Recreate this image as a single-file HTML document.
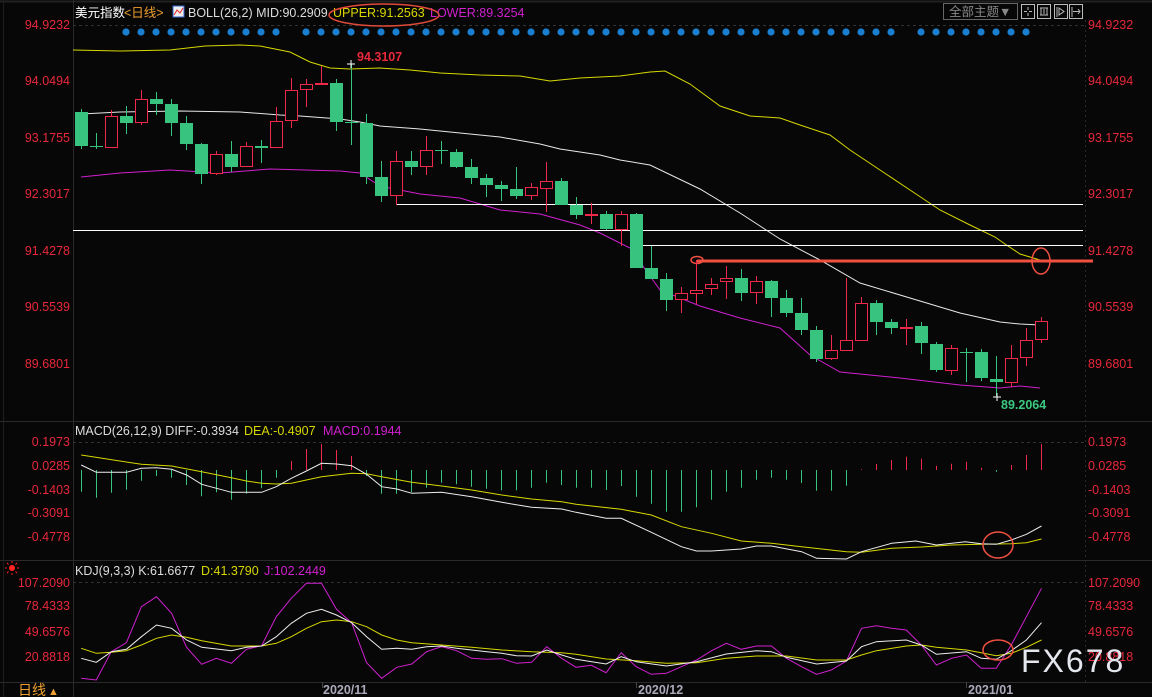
<!DOCTYPE html>
<html><head><meta charset="utf-8"><style>
html,body{margin:0;padding:0;background:#070707;overflow:hidden}
svg{display:block}
text{font-family:"Liberation Sans","Noto Sans CJK SC",sans-serif;font-size:12.5px}
</style></head><body>
<svg id="s" width="1152" height="697" viewBox="0 0 1152 697" xmlns="http://www.w3.org/2000/svg">
<rect width="1152" height="697" fill="#070707"/>
<line x1="0" y1="1.5" x2="1152" y2="1.5" stroke="#222" stroke-width="2"/>
<line x1="3.5" y1="0" x2="3.5" y2="697" stroke="#1e1e1e"/>
<line x1="73.5" y1="0" x2="73.5" y2="697" stroke="#2a2a2a"/>
<line x1="1085.5" y1="20" x2="1085.5" y2="682" stroke="#2a2a2a" stroke-dasharray="2,3"/>
<line x1="0" y1="421.5" x2="1152" y2="421.5" stroke="#2a2a2a"/>
<line x1="0" y1="560.5" x2="1152" y2="560.5" stroke="#2a2a2a"/>
<line x1="0" y1="682.5" x2="1152" y2="682.5" stroke="#2a2a2a"/>
<line x1="73" y1="25.5" x2="1085" y2="25.5" stroke="#333" stroke-dasharray="3,3"/>
<line x1="73" y1="442.5" x2="1085" y2="442.5" stroke="#333" stroke-dasharray="3,3"/>
<line x1="73" y1="582.5" x2="1085" y2="582.5" stroke="#333" stroke-dasharray="3,3"/>
<g id="g"></g>
<text x="75" y="17" fill="#fff">美元指数</text>
<text x="124" y="17" fill="#f0a030">&lt;日线&gt;</text>
<rect x="173" y="6" width="11" height="11" fill="#eee" stroke="#36c"/>
<polyline points="174,15 177,10 180,13 183,8" fill="none" stroke="#e22" stroke-width="1"/>
<text x="188" y="17" fill="#ddd">BOLL(26,2) MID:90.2909</text>
<text x="333" y="17" fill="#d8d800">UPPER:91.2563</text>
<text x="430" y="17" fill="#d020d0">LOWER:89.3254</text>
<ellipse cx="384" cy="15" rx="55" ry="11" fill="none" stroke="#e04a3a" stroke-width="1.5"/>
<rect x="943.5" y="3.5" width="74" height="16" fill="none" stroke="#666"/>
<text x="949" y="16" fill="#888">全部主题▼</text>
<g fill="none" stroke="#bbb"><rect x="1021.5" y="4.5" width="13" height="14"/><rect x="1037.5" y="4.5" width="13" height="14"/><rect x="1054.5" y="4.5" width="13" height="14"/><rect x="1069.5" y="4.5" width="13" height="14"/>
<path d="M1028 7v3M1028 13v3M1024 11.5h3M1029 11.5h3M1040 8h8M1040 15h8M1041 8v7M1047 8v7M1044 9v5M1057 7v10M1059 8l5 3.5-5 3.5zM1072 7v10M1073 11.5h7M1078 9l2 2.5-2 2.5"/></g>
<g fill="#e8283a" text-anchor="end">
<text x="70" y="29">94.9232</text><text x="70" y="85">94.0494</text><text x="70" y="142">93.1755</text><text x="70" y="198">92.3017</text><text x="70" y="255">91.4278</text><text x="70" y="311">90.5539</text><text x="70" y="368">89.6801</text>
<text x="70" y="446">0.1973</text><text x="70" y="470">0.0285</text><text x="70" y="494">-0.1403</text><text x="70" y="517">-0.3091</text><text x="70" y="541">-0.4778</text>
<text x="70" y="587">107.2090</text><text x="70" y="610">78.4333</text><text x="70" y="636">49.6576</text><text x="70" y="661">20.8818</text>
</g>
<g fill="#e8283a">
<text x="1088" y="29">94.9232</text><text x="1088" y="85">94.0494</text><text x="1088" y="142">93.1755</text><text x="1088" y="198">92.3017</text><text x="1088" y="255">91.4278</text><text x="1088" y="311">90.5539</text><text x="1088" y="368">89.6801</text>
<text x="1088" y="446">0.1973</text><text x="1088" y="470">0.0285</text><text x="1088" y="494">-0.1403</text><text x="1088" y="517">-0.3091</text><text x="1088" y="541">-0.4778</text>
<text x="1088" y="587">107.2090</text><text x="1088" y="610">78.4333</text><text x="1088" y="636">49.6576</text><text x="1088" y="661">20.8818</text>
</g>
<text x="357" y="61" fill="#e8283a" font-weight="bold">94.3107</text>
<text x="1001" y="409" fill="#3cc880" font-weight="bold">89.2064</text>
<text x="75" y="435" fill="#ddd">MACD(26,12,9) DIFF:-0.3934</text>
<text x="244" y="435" fill="#d8d800">DEA:-0.4907</text>
<text x="323" y="435" fill="#d020d0">MACD:0.1944</text>
<text x="75" y="575" fill="#ddd">KDJ(9,3,3) K:61.6677</text>
<text x="201" y="575" fill="#d8d800">D:41.3790</text>
<text x="264" y="575" fill="#d020d0">J:102.2449</text>
<circle cx="12" cy="568" r="3" fill="#f22"/>
<g stroke="#f22" stroke-width="1"><path d="M12 561v2M12 573v2M5 568h2M17 568h2M7 563l1.5 1.5M15.5 571.5l1.5 1.5M17 563l-1.5 1.5M7 573l1.5-1.5"/></g>
<text x="18" y="695" fill="#f0a030" style="font-size:14px">日线</text>
<text x="48" y="695" fill="#f0a030" style="font-size:11px">▲</text>
<g fill="#aab" font-weight="bold"><text x="323" y="694">2020/11</text><text x="638" y="694">2020/12</text><text x="968" y="694">2021/01</text></g>
<g stroke="#444"><line x1="322.5" y1="682" x2="322.5" y2="688"/><line x1="636.5" y1="682" x2="636.5" y2="688"/><line x1="966.5" y1="682" x2="966.5" y2="688"/></g>
<text x="1021" y="672" fill="#e4e6ee" style="font-size:32px;letter-spacing:2px">FX678</text>
</svg>
<script>
var g=document.getElementById('g'),h='';
function pl(pts,c,w){h+='<polyline points="'+pts.map(function(p){return p[0]+','+p[1]}).join(' ')+'" fill="none" stroke="'+c+'" stroke-width="'+(w||1)+'"/>';}
function z(a,ox,oy,sx){return a.map(function(p){return [(p[0]/sx+ox).toFixed(1),(p[1]/3+oy).toFixed(1)]});}
for(var k=0;k<=60;k++){if(k==11||k==52)continue;h+='<circle cx="'+(126+15*k)+'" cy="32" r="3.6" fill="#1a7fd0"/>';}
pl([[73,50],[120,51],[170,50],[205,46],[240,45],[260,46],[290,52],[310,62],[330,68],[350,69],[380,68],[410,70],[440,73],[480,75],[520,76],[550,81],[580,78],[620,76],[650,72],[665,71],[690,84],[720,106],[750,116],[780,118],[800,125],[830,135],[850,150],[880,170],[910,190],[940,210],[970,225],[995,237],[1005,244],[1020,254],[1040,260]],'#d8d800');
pl([[81,114],[120,112],[180,111],[240,112],[280,115],[300,116],[340,119],[360,122],[380,126],[420,129],[460,133],[500,137],[540,144],[560,149],[580,152],[600,155],[620,160],[650,165],[700,189],[740,213],[780,239],[820,260],[860,283],[920,301],[960,313],[1000,322],[1020,324],[1040,325]],'#e8e8e8');
pl([[81,177],[120,173],[170,170],[220,173],[270,169],[340,171],[360,173],[380,186],[420,194],[460,198],[500,210],[540,214],[580,225],[600,233],[630,248],[660,290],[700,306],[740,318],[780,328],[810,355],[840,372],[900,378],[960,385],[1000,388],[1020,386],[1040,388]],'#d020d0');
h+='<line x1="396" y1="204.5" x2="1083" y2="204.5" stroke="#fff"/><line x1="73" y1="230.5" x2="1083" y2="230.5" stroke="#fff"/><line x1="640" y1="245.5" x2="1083" y2="245.5" stroke="#fff"/>';
h+='<line x1="697" y1="261" x2="1093" y2="261" stroke="#f05040" stroke-width="3"/><ellipse cx="697" cy="260" rx="6" ry="3.5" fill="none" stroke="#f05040" stroke-width="1.5"/><ellipse cx="1041" cy="261" rx="9" ry="13" fill="none" stroke="#f05040" stroke-width="1.5"/>';
var C=[['g',112,146,109,149],['g',146,146,133,149],['r',116,147,110,148],['g',116,123,106,134],['r',99,122,90,125],['g',99,104,92,115],['g',104,123,99,136],['g',123,144,116,150],['g',144,174,143,184],['r',154,173,151,175],['g',154,167,141,172],['r',146,166,142,167],['g',146,148,140,163],['r',121,147,107,148],['r',90,120,78,128],['r',84,89,79,107],['r',83,84,66,85],['g',83,122,79,131],['g',122,122,64,145],['g',123,177,114,184],['g',177,196,161,202],['r',161,195,151,205],['g',161,167,151,175],['r',150,166,136,175],['g',150,151,141,164],['g',152,167,149,168],['g',167,178,159,184],['g',178,185,174,197],['g',185,189,181,201],['g',189,196,167,199],['r',187,195,183,200],['r',181,188,162,212],['g',181,205,178,205],['g',205,215,197,219],['r',214,214,203,224],['g',214,229,211,230],['r',214,229,211,246],['g',214,268,213,268],['g',268,279,246,279],['g',279,300,273,311],['r',293,299,287,313],['r',290,293,260,304],['r',284,288,278,295],['r',278,281,266,299],['g',278,293,269,301],['r',281,292,276,304],['g',281,298,280,317],['g',298,313,290,317],['g',313,330,298,335],['g',330,359,326,362],['r',350,358,335,360],['r',340,350,278,350],['r',303,340,297,341],['g',303,322,300,335],['g',322,328,319,334],['r',327,327,319,345],['g',326,343,322,354],['g',344,370,342,372],['r',348,370,345,375],['g',352,352,348,382],['g',352,378,349,381],['g',379,382,356,396],['r',358,382,345,387],['r',340,357,328,366],['r',321,339,317,343]];
C.forEach(function(c,i){var x=81+15*i,col=c[0]=='g'?'#38c47e':'#f0284a';
h+='<line x1="'+(x+.5)+'" y1="'+c[3]+'" x2="'+(x+.5)+'" y2="'+c[4]+'" stroke="'+col+'"/>';
var ht=Math.max(c[2]-c[1],1);
if(c[0]=='g')h+='<rect x="'+(x-6)+'" y="'+c[1]+'" width="13" height="'+ht+'" fill="'+col+'"/>';
else h+='<rect x="'+(x-5.5)+'" y="'+(c[1]+.5)+'" width="12" height="'+ht+'" fill="#070707" stroke="'+col+'"/>';});
h+='<path d="M347 64h8M351 60v8M993 397h8M997 393v8" stroke="#fff"/>';
var M=[230,248,233,224,197,183,188,210,244,232,254,236,220,188,138,102,87,105,123,183,236,236,232,218,203,208,215,221,226,226,218,203,210,218,218,225,213,245,266,290,290,277,254,230,218,194,188,194,204,227,227,212,163,147,135,125,131,152,146,140,158,170,150,120,87];
M.forEach(function(v,i){var x=81+15*i+.5,y=v/3+415,col=y<470?'#f0284a':'#38c47e';h+='<line x1="'+x+'" y1="470" x2="'+x+'" y2="'+y.toFixed(1)+'" stroke="'+col+'"/>';});
var S=2.722;
var dw=z([[221,150],[262,172],[344,172],[385,160],[426,158],[467,163],[508,180],[549,208],[630,232],[712,232],[752,215],[793,190],[834,168],[875,145],[916,147],[957,152],[998,178],[1039,215],[1080,222],[1121,235],[1202,232],[1284,245],[1366,262],[1447,277],[1529,282],[1568,292]],0,415,S).concat(z([[82,310],[123,310],[205,352],[287,395],[328,408],[369,408],[450,402],[491,393],[532,393],[614,410],[655,430],[736,432],[777,410],[859,385],[925,378],[981,390],[1060,380],[1103,386],[1144,388],[1185,375],[1226,358],[1267,333]],576,415,S));
var dy=z([[221,120],[385,148],[467,153],[549,170],[630,188],[671,198],[712,205],[752,207],[793,205],[875,185],[957,175],[998,176],[1039,185],[1121,202],[1202,213],[1284,225],[1366,240],[1447,252],[1529,260],[1568,268]],0,415,S).concat(z([[123,283],[205,300],[287,335],[369,355],[450,378],[532,385],[614,395],[736,410],[777,412],[859,400],[940,396],[1022,390],[1103,388],[1185,386],[1226,383],[1267,372]],576,415,S));
pl(dy,'#d8d800');pl(dw,'#eee');
h+='<ellipse cx="998" cy="545" rx="15" ry="13" fill="none" stroke="#f05040" stroke-width="1.5"/>';
var J=z([[221,355],[262,360],[303,275],[344,248],[385,140],[426,110],[467,160],[508,262],[549,313],[589,295],[630,310],[671,268],[712,257],[752,170],[793,115],[834,70],[875,70],[916,148],[957,188],[998,308],[1039,355],[1080,322],[1121,312],[1161,275],[1202,260],[1243,272],[1284,295],[1325,298],[1366,296],[1406,310],[1447,307],[1488,260],[1529,295],[1568,322]],0,560,S).concat(z([[42,316],[82,338],[123,278],[164,320],[205,343],[246,340],[287,320],[328,300],[369,272],[409,250],[450,268],[491,258],[532,258],[573,295],[614,320],[655,343],[695,330],[736,303],[777,205],[818,197],[859,205],[899,210],[940,255],[981,315],[1022,295],[1063,285],[1103,325],[1144,325],[1185,255],[1226,170],[1267,85]],576,560,S));
var K=z([[221,295],[262,307],[303,275],[344,268],[385,230],[426,195],[467,205],[508,240],[549,262],[630,272],[671,262],[712,258],[752,230],[793,190],[834,160],[875,148],[916,165],[957,188],[998,230],[1039,268],[1080,265],[1121,268],[1161,260],[1202,258],[1243,265],[1284,270],[1325,275],[1366,280],[1406,287],[1447,288],[1488,270],[1529,285],[1568,298]],0,560,S).concat(z([[82,312],[123,290],[164,305],[246,318],[328,305],[409,282],[491,272],[532,275],[573,292],[655,312],[736,303],[777,260],[818,245],[899,240],[940,255],[981,283],[1063,275],[1103,295],[1144,298],[1185,272],[1226,240],[1267,188]],576,560,S));
var D=z([[221,265],[262,280],[303,277],[344,272],[385,255],[426,235],[467,225],[508,232],[549,242],[630,258],[712,258],[752,250],[793,230],[834,205],[875,185],[916,180],[957,185],[998,200],[1039,225],[1080,240],[1121,248],[1202,255],[1284,262],[1366,270],[1447,275],[1529,278],[1568,283]],0,560,S).concat(z([[82,297],[164,302],[246,310],[328,308],[409,295],[491,288],[573,288],[655,300],[736,300],[777,285],[818,272],[899,258],[940,255],[981,262],[1063,270],[1103,278],[1144,287],[1185,280],[1226,262],[1267,240]],576,560,S));
pl(J,'#d020d0');pl(D,'#d8d800');pl(K,'#eee');
h+='<ellipse cx="998" cy="650" rx="15" ry="10" fill="none" stroke="#f05040" stroke-width="1.5"/>';
g.innerHTML=h;
</script>
</body></html>
